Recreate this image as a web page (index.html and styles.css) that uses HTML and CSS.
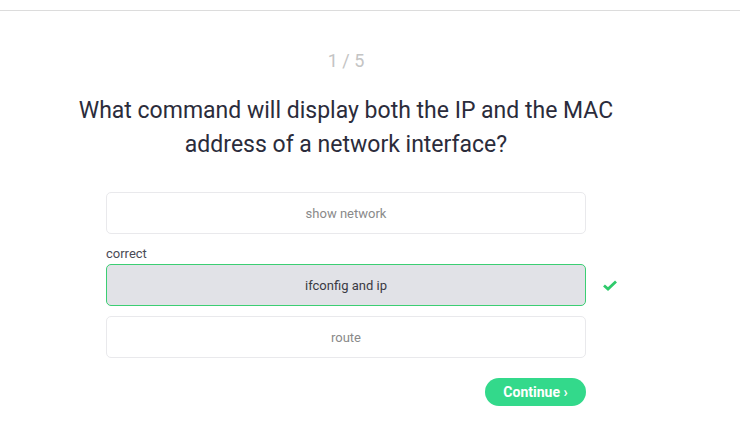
FILE: index.html
```html
<!DOCTYPE html>
<html lang="en">
<head>
  <meta charset="UTF-8" />
  <title>Quiz</title>
  <link rel="stylesheet" href="styles.css">
</head>
<body>
  <div class="topbar"></div>

  <div class="quiz">
    <div class="counter">1 / 5</div>
    <h1 class="question">What command will display both the IP and the MAC address of a network interface?</h1>

    <div class="options">
      <button class="option">show network</button>
      <div class="option-label">correct</div>
      <div class="option-row">
        <button class="option option-correct">ifconfig and ip</button>
        <svg class="check" width="14" height="11" viewBox="0 0 14 11">
          <path d="M1 5.5 L5 9 L13 1.5" fill="none" stroke="#2fca6b" stroke-width="2.8" stroke-linejoin="miter"/>
        </svg>
      </div>
      <button class="option">route</button>
    </div>

    <div class="actions">
      <button class="continue">Continue ›</button>
    </div>
  </div>
</body>
</html>
```

FILE: styles.css
```css
body {
  margin: 0;
  font-family: Roboto, "Noto Sans", sans-serif;
  background: #fff;
  color: #2b2c3b;
}

.topbar {
  height: 10px;
  border-bottom: 1px solid #dcdcdc;
}

.quiz {
  width: 692px;
  text-align: center;
}

.counter {
  margin-top: 38px;
  font-size: 18px;
  line-height: 24px;
  color: #c4c4c4;
}

.question {
  margin: 21px auto 0;
  max-width: 560px;
  font-size: 23px;
  line-height: 34px;
  font-weight: 400;
  color: #2b2c3b;
}

.options {
  width: 480px;
  margin: 30px auto 0;
  display: flex;
  flex-direction: column;
  gap: 10px;
}

.option {
  display: block;
  width: 100%;
  height: 42px;
  background: #fff;
  border: 1px solid #e9e9ec;
  border-radius: 5px;
  font-family: inherit;
  font-size: 13px;
  color: #8a8a8a;
  cursor: pointer;
}

.option-label {
  margin-bottom: -10px;
  text-align: left;
  font-size: 13px;
  line-height: 20px;
  color: #4a4a55;
}

.option-row {
  position: relative;
}

.option-correct {
  background: #e1e2e7;
  border-color: #3bce73;
  color: #3a3a44;
}

.check {
  position: absolute;
  left: 497px;
  top: 16px;
}

.actions {
  width: 480px;
  margin: 20px auto 0;
  display: flex;
  justify-content: flex-end;
}

.continue {
  height: 28px;
  width: 101px;
  border: none;
  border-radius: 14px;
  background: #33d98b;
  color: #fff;
  font-family: inherit;
  font-size: 14px;
  font-weight: 700;
  cursor: pointer;
}
```
